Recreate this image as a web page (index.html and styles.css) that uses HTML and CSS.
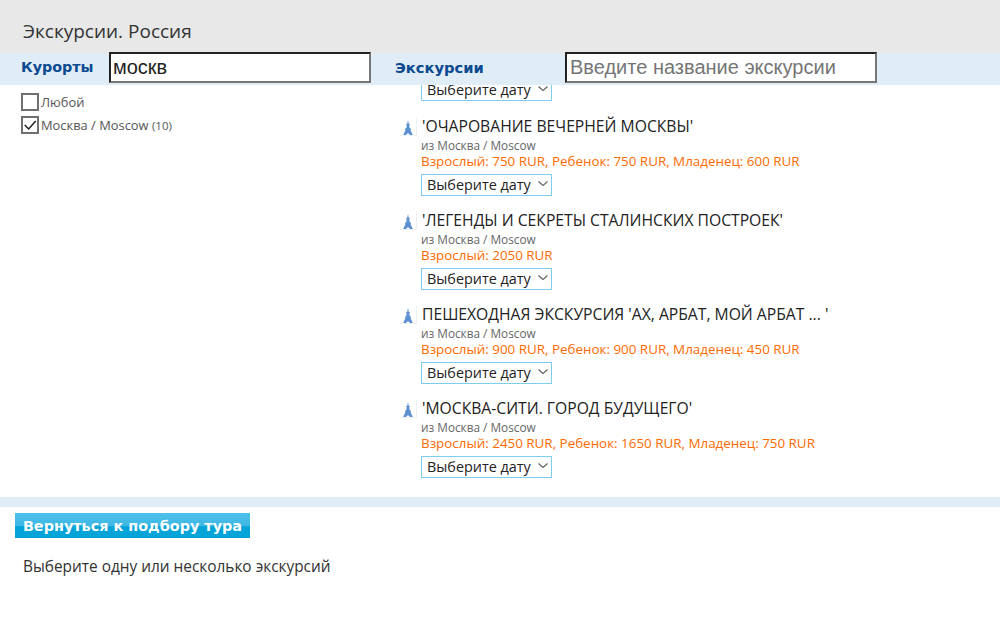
FILE: index.html
```html
<!DOCTYPE html>
<html lang="en">
<head>
    <meta charset="UTF-8">
    <title>Экскурсии. Россия</title>
    <link rel="stylesheet" href="styles.css">
</head>
<body>
    <div class="page-title">Экскурсии. Россия</div>

    <div class="filter-bar">
        <div class="filter-left">
            <span class="filter-label">Курорты</span>
            <input type="text" class="filter-input filter-input-resort" value="москв">
        </div>
        <div class="filter-right">
            <span class="filter-label filter-label-tours">Экскурсии</span>
            <input type="text" class="filter-input filter-input-tour" placeholder="Введите название экскурсии">
        </div>
    </div>

    <div class="main">
        <div class="resorts">
            <label class="resort-row">
                <span class="check"></span>
                <span>Любой</span>
            </label>
            <label class="resort-row">
                <span class="check">
                    <svg width="14" height="14" viewBox="0 0 16 16"><path d="M2 8 L6.5 12.5 L14.5 3.5" fill="none" stroke="#222" stroke-width="1.8"/></svg>
                </span>
                <span>Москва / Moscow <span class="count">(10)</span></span>
            </label>
        </div>

        <div class="tours">
            <div class="date-select date-select-clipped">
                <select><option>Выберите дату</option></select>
                <svg class="chevron" width="10" height="5" viewBox="0 0 10 5"><path d="M0.5 0.5 L5 4.5 L9.5 0.5" fill="none" stroke="#666" stroke-width="1.2"/></svg>
            </div>

            <div class="tour">
                <div class="tour-head">
                    <span class="tour-icon">
                        <svg width="10" height="15" viewBox="0 0 10 15"><path d="M5 0 L5.8 4 L6.8 4 L6.8 5 L6.2 5 L6.8 8.5 L8 8.5 L8 9.8 L7.4 9.8 L9.8 15 L7 15 Q5 11.5 3 15 L0.2 15 L2.6 9.8 L2 9.8 L2 8.5 L3.2 8.5 L3.8 5 L3.2 5 L3.2 4 L4.2 4 Z" fill="#5b8fd0"/></svg>
                    </span>
                    <span class="tour-name">'ОЧАРОВАНИЕ ВЕЧЕРНЕЙ МОСКВЫ'</span>
                </div>
                <div class="tour-from">из Москва / Moscow</div>
                <div class="tour-price">Взрослый: 750 RUR, Ребенок: 750 RUR, Младенец: 600 RUR</div>
                <div class="date-select">
                    <select><option>Выберите дату</option></select>
                    <svg class="chevron" width="10" height="5" viewBox="0 0 10 5"><path d="M0.5 0.5 L5 4.5 L9.5 0.5" fill="none" stroke="#666" stroke-width="1.2"/></svg>
                </div>
            </div>

            <div class="tour">
                <div class="tour-head">
                    <span class="tour-icon">
                        <svg width="10" height="15" viewBox="0 0 10 15"><path d="M5 0 L5.8 4 L6.8 4 L6.8 5 L6.2 5 L6.8 8.5 L8 8.5 L8 9.8 L7.4 9.8 L9.8 15 L7 15 Q5 11.5 3 15 L0.2 15 L2.6 9.8 L2 9.8 L2 8.5 L3.2 8.5 L3.8 5 L3.2 5 L3.2 4 L4.2 4 Z" fill="#5b8fd0"/></svg>
                    </span>
                    <span class="tour-name">'ЛЕГЕНДЫ И СЕКРЕТЫ СТАЛИНСКИХ ПОСТРОЕК'</span>
                </div>
                <div class="tour-from">из Москва / Moscow</div>
                <div class="tour-price">Взрослый: 2050 RUR</div>
                <div class="date-select">
                    <select><option>Выберите дату</option></select>
                    <svg class="chevron" width="10" height="5" viewBox="0 0 10 5"><path d="M0.5 0.5 L5 4.5 L9.5 0.5" fill="none" stroke="#666" stroke-width="1.2"/></svg>
                </div>
            </div>

            <div class="tour">
                <div class="tour-head">
                    <span class="tour-icon">
                        <svg width="10" height="15" viewBox="0 0 10 15"><path d="M5 0 L5.8 4 L6.8 4 L6.8 5 L6.2 5 L6.8 8.5 L8 8.5 L8 9.8 L7.4 9.8 L9.8 15 L7 15 Q5 11.5 3 15 L0.2 15 L2.6 9.8 L2 9.8 L2 8.5 L3.2 8.5 L3.8 5 L3.2 5 L3.2 4 L4.2 4 Z" fill="#5b8fd0"/></svg>
                    </span>
                    <span class="tour-name">ПЕШЕХОДНАЯ ЭКСКУРСИЯ 'АХ, АРБАТ, МОЙ АРБАТ ... '</span>
                </div>
                <div class="tour-from">из Москва / Moscow</div>
                <div class="tour-price">Взрослый: 900 RUR, Ребенок: 900 RUR, Младенец: 450 RUR</div>
                <div class="date-select">
                    <select><option>Выберите дату</option></select>
                    <svg class="chevron" width="10" height="5" viewBox="0 0 10 5"><path d="M0.5 0.5 L5 4.5 L9.5 0.5" fill="none" stroke="#666" stroke-width="1.2"/></svg>
                </div>
            </div>

            <div class="tour">
                <div class="tour-head">
                    <span class="tour-icon">
                        <svg width="10" height="15" viewBox="0 0 10 15"><path d="M5 0 L5.8 4 L6.8 4 L6.8 5 L6.2 5 L6.8 8.5 L8 8.5 L8 9.8 L7.4 9.8 L9.8 15 L7 15 Q5 11.5 3 15 L0.2 15 L2.6 9.8 L2 9.8 L2 8.5 L3.2 8.5 L3.8 5 L3.2 5 L3.2 4 L4.2 4 Z" fill="#5b8fd0"/></svg>
                    </span>
                    <span class="tour-name">'МОСКВА-СИТИ. ГОРОД БУДУЩЕГО'</span>
                </div>
                <div class="tour-from">из Москва / Moscow</div>
                <div class="tour-price">Взрослый: 2450 RUR, Ребенок: 1650 RUR, Младенец: 750 RUR</div>
                <div class="date-select">
                    <select><option>Выберите дату</option></select>
                    <svg class="chevron" width="10" height="5" viewBox="0 0 10 5"><path d="M0.5 0.5 L5 4.5 L9.5 0.5" fill="none" stroke="#666" stroke-width="1.2"/></svg>
                </div>
            </div>
        </div>
    </div>

    <div class="footer-band"></div>
    <button type="button" class="back-button">Вернуться к подбору тура</button>
    <p class="hint">Выберите одну или несколько экскурсий</p>
</body>
</html>
```

FILE: styles.css
```css
body {
    font-family: "Open Sans", "Noto Sans", sans-serif;
    margin: 0;
    padding: 0;
    background-color: #ffffff;
    color: #333;
}
.page-title {
    height: 53px;
    box-sizing: border-box;
    padding: 19px 0 0 23px;
    background-color: #e8e8e8;
    font-size: 19px;
    line-height: 25px;
    color: #333;
}
.filter-bar {
    display: flex;
    height: 32px;
    background-color: #e0ecf6;
}
.filter-left {
    display: flex;
    width: 395px;
    padding-left: 21px;
    box-sizing: border-box;
}
.filter-right {
    display: flex;
}
.filter-label {
    width: 88px;
    font-family: "DejaVu Sans", sans-serif;
    font-weight: bold;
    font-size: 14.3px;
    line-height: 29px;
    color: #0b4a91;
}
.filter-label-tours {
    width: 170px;
    font-size: 14.7px;
}
.filter-input {
    box-sizing: border-box;
    height: 31px;
    margin-top: -1px;
    padding: 0 3px;
    border: 2px solid;
    border-color: #222 #767676 #767676 #222;
    background: #fff;
    font-family: "Liberation Sans", Arial, sans-serif;
    font-size: 20px;
    color: #222;
    outline: none;
}
.filter-input::placeholder {
    color: #757575;
}
.filter-input-resort {
    width: 262px;
    padding-left: 2px;
}
.filter-input-tour {
    width: 312px;
}
.main {
    display: flex;
    height: 412px;
    overflow: hidden;
}
.resorts {
    width: 400px;
    box-sizing: border-box;
    padding: 5px 0 0 21px;
}
.resort-row {
    display: flex;
    align-items: center;
    height: 23px;
    font-size: 12.9px;
    color: #555;
}
.count {
    font-size: 11.5px;
}
.check {
    width: 18px;
    height: 18px;
    box-sizing: border-box;
    border: 2px solid #707070;
    background: #fff;
    margin-right: 2px;
    display: flex;
}
.check svg {
    display: block;
}
.tours {
    flex: 1;
}
.tour {
    margin-bottom: 11.5px;
}
.tour-head {
    display: flex;
    align-items: center;
    height: 26px;
}
.tour-icon {
    width: 17px;
    height: 18px;
    box-sizing: border-box;
    margin: 3px 4px 0 0;
    padding: 2px 0 0 3px;
    border-right: 1px solid #eceff3;
    border-bottom: 1px solid #eceff3;
}
.tour-icon svg {
    display: block;
}
.tour-name {
    margin-left: 1px;
    font-size: 15.7px;
    color: #222;
}
.tour-from {
    margin-left: 21px;
    font-size: 11.8px;
    line-height: 13px;
    color: #666;
}
.tour-price {
    margin-left: 21px;
    font-size: 13.4px;
    line-height: 18px;
    color: #ff6a00;
}
.date-select {
    position: relative;
    width: 131px;
    height: 22px;
    margin: 3.5px 0 0 21px;
}
.date-select-clipped {
    margin-top: -7px;
    margin-bottom: 12.5px;
}
.date-select select {
    appearance: none;
    width: 100%;
    height: 100%;
    box-sizing: border-box;
    border: 1px solid #7fcdee;
    border-radius: 0;
    background: #fff;
    padding: 0 0 0 5px;
    font-family: "Open Sans", "Noto Sans", sans-serif;
    font-size: 14.4px;
    color: #222;
}
.chevron {
    position: absolute;
    right: 4px;
    top: 8px;
    pointer-events: none;
}
.footer-band {
    height: 10px;
    background-color: #e0ecf6;
}
.back-button {
    display: block;
    width: 235px;
    height: 25px;
    margin: 6px 0 0 15px;
    padding: 0;
    border: none;
    background: linear-gradient(to bottom, #4ec0ea 0%, #3db8e4 50%, #04a3d8 55%, #04a3d8 100%);
    color: #fff;
    font-family: "DejaVu Sans", sans-serif;
    font-weight: bold;
    font-size: 14.4px;
    cursor: pointer;
}
.hint {
    margin: 19px 0 0 23px;
    font-size: 15.4px;
    line-height: 20px;
    color: #333;
}
```
